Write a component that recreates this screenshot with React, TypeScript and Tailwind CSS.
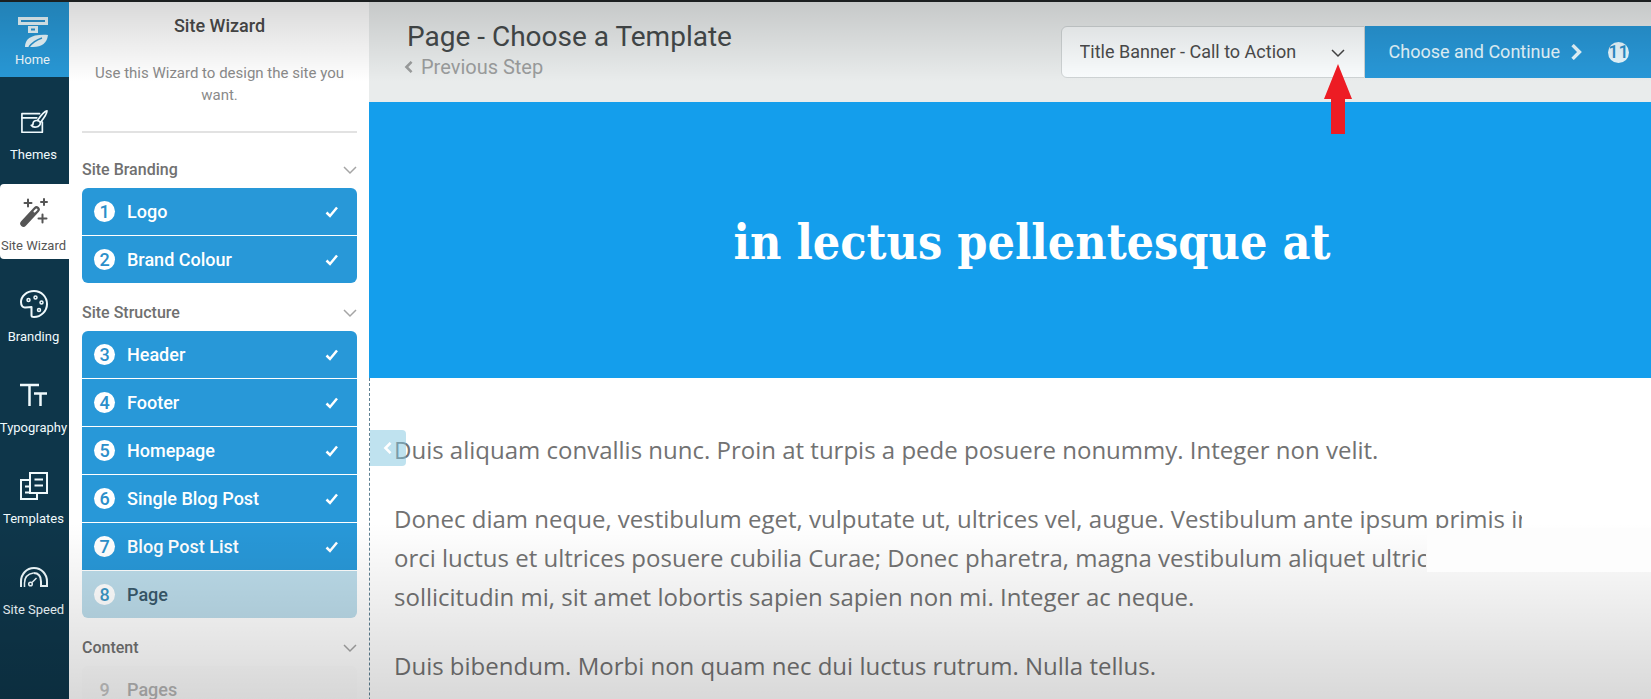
import { ReactNode } from "react"

const railItems: { label: string; icon: ReactNode; active?: boolean }[] = [
  { label: "Themes", icon: <ThemesIcon /> },
  { label: "Site Wizard", icon: <WizardIcon />, active: true },
  { label: "Branding", icon: <PaletteIcon /> },
  { label: "Typography", icon: <TypographyIcon /> },
  { label: "Templates", icon: <TemplatesIcon /> },
  { label: "Site Speed", icon: <SpeedIcon /> },
]

type Step = { id: number; label: string; state: "done" | "current" | "todo" }

const sections: { title: string; steps: Step[] }[] = [
  {
    title: "Site Branding",
    steps: [
      { id: 1, label: "Logo", state: "done" },
      { id: 2, label: "Brand Colour", state: "done" },
    ],
  },
  {
    title: "Site Structure",
    steps: [
      { id: 3, label: "Header", state: "done" },
      { id: 4, label: "Footer", state: "done" },
      { id: 5, label: "Homepage", state: "done" },
      { id: 6, label: "Single Blog Post", state: "done" },
      { id: 7, label: "Blog Post List", state: "done" },
      { id: 8, label: "Page", state: "current" },
    ],
  },
  {
    title: "Content",
    steps: [{ id: 9, label: "Pages", state: "todo" }],
  },
]

const stepStyles = {
  done: "bg-[#2898d8] text-white",
  current: "bg-[#bcdcea] text-[#38596b]",
  todo: "bg-[#fdfdfd] text-[#b4b4b4]",
}

const badgeStyles = {
  done: "bg-white text-[#2b8fca]",
  current: "bg-white text-[#3c97c6]",
  todo: "text-[#c4c4c4]",
}

function LogoIcon() {
  return (
    <svg width="32" height="32" viewBox="0 0 32 32" fill="none">
      <path d="M1 1h30v8H1z" fill="#e6f6fb" />
      <path d="M4 4h24v2H4z" fill="#2b94cf" />
      <path d="M11 10h10v7H11z" fill="#e6f6fb" />
      <path d="M14 12.500h4v2h-4z" fill="#2b94cf" />
      <path d="M8 31C8 23 14 18 31 19c-1 8-6 12-15 12H8z" fill="#e6f6fb" />
      <path d="M12 31c3-4 7-7 13-9" stroke="#2b94cf" strokeWidth="1.500" />
    </svg>
  )
}

function ThemesIcon() {
  return (
    <svg width="28" height="26" viewBox="0 0 30 28" fill="none" stroke="currentColor" strokeWidth="1.800" strokeLinejoin="round" strokeLinecap="round">
      <path d="M21 5H2v20h22V14" />
      <path d="M2 9.500H18" />
      <path d="M29 2c-3 .5-6 4-10 10l3 2.500c4-5 7-9 7-12.500z" />
      <path d="M19 12.500c-4-.5-5 1.500-5 3 0 1.500-1 2-2 2 2 3 9.500 3 10-3" />
    </svg>
  )
}

function WizardIcon() {
  return (
    <svg width="30" height="30" viewBox="0 0 30 30" fill="none" stroke="currentColor" strokeLinecap="round">
      <path d="M4.500 25.500 17.500 11.500" strokeWidth="6.500" />
      <path d="M15.500 13.500 17.500 11.500" stroke="#fff" strokeWidth="2" />
      <path d="M9 1.500v7M5.500 5h7M25 1v6M22 4h6M23.500 16.500v8M19.500 20.500h8" strokeWidth="2" />
    </svg>
  )
}

function PaletteIcon() {
  return (
    <svg width="30" height="30" viewBox="0 0 30 30" fill="none" stroke="currentColor">
      <path d="M12.500 18v8.500c0 1 1 1.500 2.500 1.500 7 0 13-6 13-13S22.500 2 15 2 2 7.500 2 13c0 4 2 6 4.500 5.500 2-.3 3.500-.5 6-.5z" strokeWidth="2" strokeLinejoin="round" />
      <circle cx="9.500" cy="11" r="1.500" strokeWidth="1.500" />
      <circle cx="16.500" cy="8.500" r="1.500" strokeWidth="1.500" />
      <circle cx="22.500" cy="13.500" r="1.500" strokeWidth="1.500" />
      <circle cx="20" cy="21" r="1.500" strokeWidth="1.500" />
    </svg>
  )
}

function TypographyIcon() {
  return (
    <svg width="30" height="26" viewBox="0 0 30 26" fill="none" stroke="currentColor" strokeWidth="2.500">
      <path d="M1 3h19M10.500 3v21M15 11.500h13M21.500 11.500V24" />
    </svg>
  )
}

function TemplatesIcon() {
  return (
    <svg width="30" height="30" viewBox="0 0 30 30" fill="none" stroke="currentColor" strokeWidth="2">
      <path d="M11 2h17v20H11z" />
      <path d="M11 9H2v19h16v-6" />
      <path d="M15.500 8.500h8.500M15.500 14.500h8.500M6 15.500h5M6 21.500h5" />
    </svg>
  )
}

function SpeedIcon() {
  return (
    <svg width="30" height="22" viewBox="0 0 30 22" fill="none" stroke="currentColor" strokeWidth="2">
      <path d="M2 21v-5.500C2 8 7.500 2 15 2s13 6 13 13.500V20h-6v-4.500C22 10 19 7 14.500 7" />
      <path d="M5.500 21v-4c0-5 2.500-9 9-10" strokeWidth="1.500" />
      <circle cx="11.500" cy="18" r="1.800" strokeWidth="1.500" />
      <path d="M13 16.500 17.500 12" strokeWidth="1.500" />
    </svg>
  )
}

function Chevron({ className = "", size = 14, weight = 2 }: { className?: string; size?: number; weight?: number }) {
  return (
    <svg width={size} height={size} viewBox="0 0 14 14" fill="none" stroke="currentColor" strokeWidth={weight} className={className}>
      <path d="M1 4l6 6 6-6" />
    </svg>
  )
}

function Check() {
  return (
    <svg width="14" height="14" viewBox="0 0 14 14" fill="none" stroke="currentColor" strokeWidth="2.500">
      <path d="M1.500 7.500 5 11l7-8.500" />
    </svg>
  )
}

function Rail() {
  return (
    <nav className="flex w-[69px] shrink-0 flex-col bg-[#0e364a] text-[13px] leading-4 text-[#f0fafd]">
      <a href="#home" className="flex h-[75px] flex-col items-center gap-1 bg-[#2898d6] pt-[14px] pr-1">
        <LogoIcon />
        Home
      </a>
      <div className="mt-4 flex flex-col gap-4">
        {railItems.map((item) => (
          <a
            key={item.label}
            href="#"
            className={`flex h-[75px] flex-col items-center whitespace-nowrap pt-3 pr-0.5 ${item.active ? "rounded-l bg-white text-[#555]" : ""}`}
          >
            <span className="mb-2 flex h-[34px] items-center">{item.icon}</span>
            {item.label}
          </a>
        ))}
      </div>
    </nav>
  )
}

function StepRow({ step }: { step: Step }) {
  return (
    <li>
      <button className={`flex h-[47px] w-full items-center px-3 text-left text-lg font-medium ${stepStyles[step.state]}`}>
        <span className={`flex size-[21px] items-center justify-center rounded-full ${badgeStyles[step.state]}`}>{step.id}</span>
        <span className="ml-3 flex-1">{step.label}</span>
        <span className="mr-1.5">{step.state === "done" && <Check />}</span>
      </button>
    </li>
  )
}

function Sidebar() {
  return (
    <aside className="w-[300px] shrink-0 overflow-hidden bg-white pr-3 pl-[13px]">
      <h2 className="pt-3 text-center text-lg leading-6 font-medium text-[#4a4a4a]">Site Wizard</h2>
      <p className="mt-6 border-b-2 border-[#e2e2e2] px-2 pb-[25px] text-center text-[15px] leading-[22px] text-[#8a8a8a]">
        Use this Wizard to design the site you want.
      </p>
      <div className="mt-[27px] flex flex-col gap-5">
        {sections.map((section) => (
          <section key={section.title}>
            <h3 className="mb-2 flex items-center justify-between text-base leading-5 font-medium text-[#707070]">
              {section.title}
              <Chevron className="text-[#a5a5a5]" weight={1.5} />
            </h3>
            <ul className="flex flex-col gap-px overflow-hidden rounded-md">
              {section.steps.map((step) => (
                <StepRow key={step.id} step={step} />
              ))}
            </ul>
          </section>
        ))}
      </div>
    </aside>
  )
}

function Toolbar() {
  return (
    <header className="flex h-[100px] shrink-0 items-start justify-between bg-[#e9ecec]">
      <div className="pt-[17px] pl-[34px]">
        <h1 className="pl-1 text-[28px] leading-9 text-[#454a4b]">Page - Choose a Template</h1>
        <a href="#previous" className="flex items-center gap-1.5 text-xl leading-6 text-[#9b9d9d]">
          <Chevron className="rotate-90" size={12} weight={3} />
          Previous Step
        </a>
      </div>
      <div className="relative mt-6 flex h-[52px]">
        <div className="relative">
          <select
            aria-label="Template"
            className="h-full w-[304px] appearance-none rounded-l-md border border-[#cfd4d5] bg-[#fafdfe] pl-[18px] text-lg text-[#4c4c4c]"
          >
            <option>Title Banner - Call to Action</option>
          </select>
          <Chevron className="pointer-events-none absolute top-5 right-5 text-[#444]" weight={1.5} />
        </div>
        <button className="flex items-center bg-[#2898d8] pr-[22px] pl-6 text-lg text-[#e6f8ff]">
          Choose and Continue
          <Chevron className="ml-2 -rotate-90" size={16} weight={3} />
          <span className="ml-6 flex size-[21px] items-center justify-center rounded-full bg-[#e6f8ff] font-medium text-[#2b8fca]">11</span>
        </button>
        <svg width="28" height="70" viewBox="0 0 28 70" fill="#ed1c24" className="absolute top-[38px] left-[263px] z-20">
          <path d="M14 0l14 35h-7v35H7V35H0z" />
        </svg>
      </div>
    </header>
  )
}

function Preview() {
  return (
    <main className="flex-1 bg-white">
      <div className="flex h-[276px] items-center justify-center bg-[#149eec] pt-1 pl-11">
        <h2 className="font-['DejaVu_Serif_Condensed','DejaVu_Serif',serif] text-5xl font-bold text-white">in lectus pellentesque at</h2>
      </div>
      <div className="relative h-full border-l border-dashed border-[#5d7f92] pt-[52px] pl-6 font-['Open_Sans',sans-serif] text-2xl leading-[39px] text-[#727272]">
        <button aria-label="Collapse sidebar" className="absolute top-[52px] left-0 flex h-9 w-9 items-center rounded-r bg-[#7fc6e0]/50 pl-3 text-white">
          <Chevron className="rotate-90" size={12} weight={3} />
        </button>
        <p className="mb-[30px]">Duis aliquam convallis nunc. Proin at turpis a pede posuere nonummy. Integer non velit.</p>
        <p className="mb-[30px] whitespace-nowrap">
          <span className="block w-[1128px] overflow-hidden">
            Donec diam neque, vestibulum eget, vulputate ut, ultrices vel, augue. Vestibulum ante ipsum primis in
          </span>
          <span className="block w-[1032px] overflow-hidden">
            orci luctus et ultrices posuere cubilia Curae; Donec pharetra, magna vestibulum aliquet ultrices
          </span>
          sollicitudin mi, sit amet lobortis sapien sapien non mi. Integer ac neque.
        </p>
        <p>Duis bibendum. Morbi non quam nec dui luctus rutrum. Nulla tellus.</p>
        <div className="absolute top-[150px] right-0 z-20 h-11 w-56 bg-[#fdfdfd]" />
      </div>
    </main>
  )
}

export default function App() {
  return (
    <div className="relative flex h-screen overflow-hidden border-t-2 border-[#1b1f20] font-[Roboto,sans-serif]">
      <Rail />
      <Sidebar />
      <div className="flex min-w-0 flex-1 flex-col overflow-hidden">
        <Toolbar />
        <Preview />
      </div>
      <div className="pointer-events-none absolute inset-x-0 top-0 z-10 h-20 bg-linear-to-b from-black/15 to-transparent" />
      <div className="pointer-events-none absolute inset-x-0 bottom-0 z-10 h-44 bg-linear-to-t from-black/15 to-transparent" />
    </div>
  )
}
